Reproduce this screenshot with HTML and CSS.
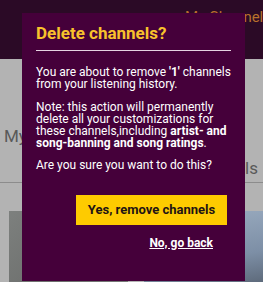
FILE: index.html
```html
<!DOCTYPE html>
<html lang="en">
<head>
<meta charset="UTF-8">
<meta name="viewport" content="width=device-width, initial-scale=1.0">
<title>My Channels - Delete channels</title>
<link rel="stylesheet" href="styles.css">
</head>
<body>
  <header class="topbar">
    <a class="topbar-link" href="#">My Channels</a>
  </header>
  <div class="tabs">
    <div class="tab tab-left">My Channels</div>
    <div class="tab tab-right">Shared Channels</div>
  </div>
  <div class="cards">
    <div class="card card-grey"></div>
    <div class="card card-blue"></div>
  </div>

  <div class="dialog">
    <h2 class="dialog-title">Delete channels?</h2>
    <p>You are about to remove <b>'1'</b> channels from your listening history.</p>
    <p>Note: this action will permanently delete all your customizations for these channels,including <b>artist- and song-banning and song ratings</b>.</p>
    <p>Are you sure you want to do this?</p>
    <div class="dialog-actions">
      <button class="confirm-btn">Yes, remove channels</button>
      <a class="back-link" href="#">No, go back</a>
    </div>
  </div>
</body>
</html>
```

FILE: styles.css
```css
* {
  margin: 0;
  padding: 0;
  box-sizing: border-box;
}

body {
  font-family: Roboto, 'Liberation Sans', sans-serif;
  background-color: #b3b3b3;
  width: 263px;
  height: 282px;
  overflow: hidden;
}

.topbar {
  height: 59px;
  background-color: #2b0a26;
  padding: 7px 0 0 185px;
  white-space: nowrap;
}

.topbar-link {
  color: #b8702c;
  font-size: 15px;
  text-decoration: none;
}

.tabs {
  height: 124px;
  border-bottom: 1px solid #8c8c8c;
  display: flex;
  justify-content: space-between;
  color: #595959;
  font-size: 17px;
  white-space: nowrap;
}

.tab-left {
  padding: 67px 0 0 4px;
}

.tab-right {
  padding: 99px 5px 0 0;
}

.cards {
  display: grid;
  grid-template-columns: 1fr 1fr;
  gap: 16px;
  padding: 28px 0 0 9px;
}

.card {
  height: 80px;
}

.card-grey {
  background: linear-gradient(135deg, #7d807e, #6c6e6c 60%, #777a78);
}

.card-blue {
  background: linear-gradient(170deg, #9fb0c4, #7d8fa6 60%, #55606f);
}

.dialog {
  position: absolute;
  left: 22px;
  top: 13px;
  width: 223px;
  height: 268px;
  background-color: #45003a;
  padding: 10px 14px;
  color: #fff;
  font-size: 12px;
  line-height: 12px;
}

.dialog-title {
  color: #f8c22c;
  font-size: 17px;
  line-height: 20px;
  font-weight: bold;
  padding-bottom: 7px;
  border-bottom: 1px solid #e6d3e2;
  margin-bottom: 15px;
}

.dialog p {
  margin-bottom: 10.5px;
}

.dialog-actions {
  display: flex;
  flex-direction: column;
  align-items: flex-end;
  padding-top: 13px;
}

.confirm-btn {
  width: 151px;
  height: 30px;
  margin-right: 4px;
  background-color: #fecb00;
  color: #1e1414;
  border: none;
  font-family: Roboto, 'Liberation Sans', sans-serif;
  font-size: 13px;
  font-weight: bold;
}

.back-link {
  margin: 12px 18px 0 0;
  color: #fff;
  font-size: 12px;
  font-weight: bold;
  text-decoration: underline;
}
```
